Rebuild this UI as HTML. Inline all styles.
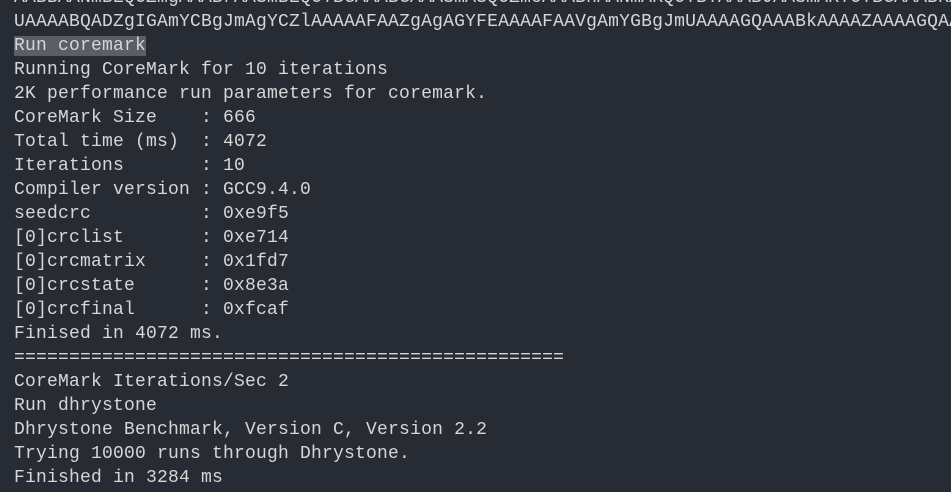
<!DOCTYPE html>
<html><head><meta charset="utf-8"><style>
html,body{margin:0;padding:0;background:#272b33;width:951px;height:492px;overflow:hidden}
pre{margin:0;position:absolute;left:14px;top:-14px;font-family:"Liberation Mono","DejaVu Sans Mono",monospace;font-size:18px;letter-spacing:0.2px;line-height:24px;color:#d6d6d6;white-space:pre}
.h{background:#5a5e66}
</style></head><body>
<pre>AABBAANmBEQCZmgAAABrAASmBEQCYBGAAABGAAASmASQCZmcAAABhAANmAKQCYBYAAABJAASmAKYCYBGAAABKAA
UAAAABQADZgIGAmYCBgJmAgYCZlAAAAAFAAZgAgAGYFEAAAAFAAVgAmYGBgJmUAAAAGQAAABkAAAAZAAAAGQAA
<span class="h">Run coremark</span>
Running CoreMark for 10 iterations
2K performance run parameters for coremark.
CoreMark Size    : 666
Total time (ms)  : 4072
Iterations       : 10
Compiler version : GCC9.4.0
seedcrc          : 0xe9f5
[0]crclist       : 0xe714
[0]crcmatrix     : 0x1fd7
[0]crcstate      : 0x8e3a
[0]crcfinal      : 0xfcaf
Finised in 4072 ms.
==================================================
CoreMark Iterations/Sec 2
Run dhrystone
Dhrystone Benchmark, Version C, Version 2.2
Trying 10000 runs through Dhrystone.
Finished in 3284 ms</pre>
</body></html>
